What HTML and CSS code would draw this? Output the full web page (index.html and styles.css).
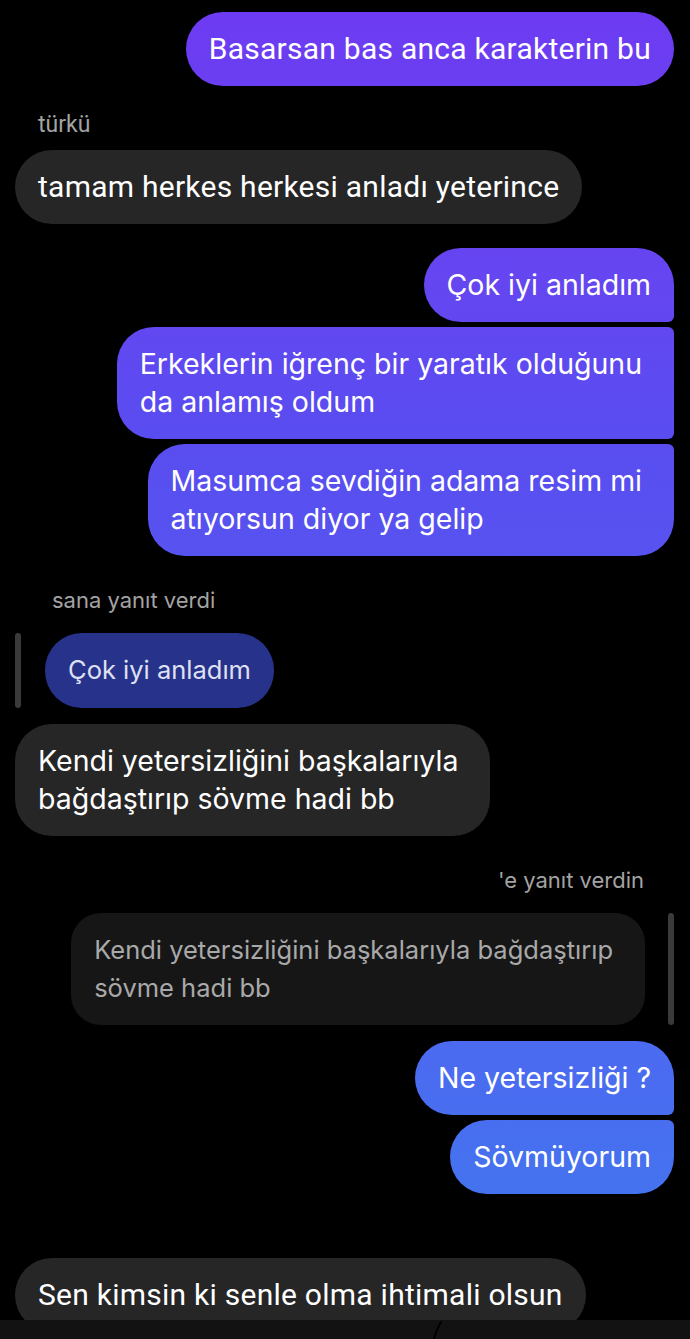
FILE: index.html
```html
<!DOCTYPE html>
<html lang="tr">
<head>
    <meta charset="UTF-8">
    <meta name="viewport" content="width=device-width, initial-scale=1.0">
    <title>Sohbet</title>
    <link rel="stylesheet" href="styles.css">
</head>
<body>
    <main class="chat">
        <div class="row out first-row">
            <div class="msg sent solo narrow">Basarsan bas anca karakterin bu</div>
        </div>

        <div class="sender">türkü</div>
        <div class="row in">
            <div class="msg received narrow">tamam herkes herkesi anladı yeterince</div>
        </div>

        <div class="group out">
            <div class="msg sent top">Çok iyi anladım</div>
            <div class="msg sent mid multi">Erkeklerin iğrenç bir yaratık olduğunu<br>da anlamış oldum</div>
            <div class="msg sent bottom multi">Masumca sevdiğin adama resim mi<br>atıyorsun diyor ya gelip</div>
        </div>

        <div class="reply-label in">sana yanıt verdi</div>
        <div class="quote-row in">
            <span class="quote-bar"></span>
            <div class="quote navy">Çok iyi anladım</div>
        </div>
        <div class="row in after-quote">
            <div class="msg received multi">Kendi yetersizliğini başkalarıyla<br>bağdaştırıp sövme hadi bb</div>
        </div>

        <div class="reply-label out">'e yanıt verdin</div>
        <div class="quote-row out">
            <div class="quote dark">Kendi yetersizliğini başkalarıyla bağdaştırıp<br>sövme hadi bb</div>
            <span class="quote-bar"></span>
        </div>
        <div class="group out after-quote">
            <div class="msg sent top">Ne yetersizliği ?</div>
            <div class="msg sent bottom">Sövmüyorum</div>
        </div>

        <div class="row in last-row">
            <div class="msg received narrow">Sen kimsin ki senle olma ihtimali olsun</div>
        </div>
    </main>

    <footer class="composer">
        <svg class="mark" width="14" height="19" viewBox="0 0 14 19">
            <path d="M11 2 C8 7 6 12 4 19" stroke="#000" stroke-width="2" fill="none" stroke-linecap="round"/>
        </svg>
    </footer>
</body>
</html>
```

FILE: styles.css
```css
html, body {
    margin: 0;
    padding: 0;
    height: 1339px;
    overflow: hidden;
    background: #000;
}
body {
    font-family: Inter, "Noto Sans", sans-serif;
    color: #fff;
}
.chat {
    display: flex;
    flex-direction: column;
    padding: 0 16px 0 15px;
}
.row {
    display: flex;
}
.row.out, .group.out {
    justify-content: flex-end;
}
.first-row {
    margin-top: 12px;
}
.group {
    display: flex;
    flex-direction: column;
    align-items: flex-end;
    gap: 5px;
    margin-top: 24px;
}
.after-quote {
    margin-top: 16px;
}
.last-row {
    margin-top: 64px;
}

/* bubbles */
.msg {
    font-size: 28.5px;
    line-height: 38px;
    padding: 18px 23px;
    border-radius: 37px;
    white-space: nowrap;
}
.msg.multi {
    padding-right: 32px;
}
.msg.narrow {
    font-family: Roboto, "Liberation Sans", sans-serif;
    font-size: 30px;
    letter-spacing: 0.25px;
}
.sent {
    background: linear-gradient(180deg, #6d3bf2 0, #6546f1 280px, #5a4cf0 420px, #4a6cf0 1080px, #4473ef 1200px) fixed;
}
.received {
    background: #262626;
}
.sent.top {
    border-radius: 37px 37px 6px 37px;
}
.sent.mid {
    border-radius: 37px 6px 6px 37px;
}
.sent.bottom {
    border-radius: 37px 6px 37px 37px;
}

/* labels */
.sender, .reply-label {
    font-size: 22px;
    line-height: 22px;
    color: #a3a3a3;
}
.sender {
    font-family: Roboto, "Liberation Sans", sans-serif;
    font-size: 23px;
    margin: 28px 0 14px 23px;
}
.reply-label {
    margin-top: 33px;
    margin-bottom: 22px;
}
.reply-label.in {
    margin-left: 37px;
}
.reply-label.out {
    align-self: flex-end;
    margin-right: 30px;
}

/* quoted replies */
.quote-row {
    display: flex;
    align-items: stretch;
    gap: 24px;
}
.quote-row.out {
    justify-content: flex-end;
    gap: 23px;
}
.quote-bar {
    width: 6px;
    border-radius: 3px;
    background: #3a3a3a;
}
.quote {
    font-size: 25.5px;
    line-height: 38px;
    padding: 18px 23px 19px;
    border-radius: 37px;
    white-space: nowrap;
}
.quote.navy {
    background: #27338a;
    color: #dfe1f2;
}
.quote.dark {
    background: #161616;
    color: #a9a9a9;
    padding: 18px 32px 18px 23px;
    border-radius: 30px;
}

/* bottom bar */
.composer {
    position: fixed;
    left: 0;
    right: 0;
    bottom: 0;
    height: 19px;
    background: #121212;
}
.composer .mark {
    position: absolute;
    left: 430px;
    top: 0;
}
```
